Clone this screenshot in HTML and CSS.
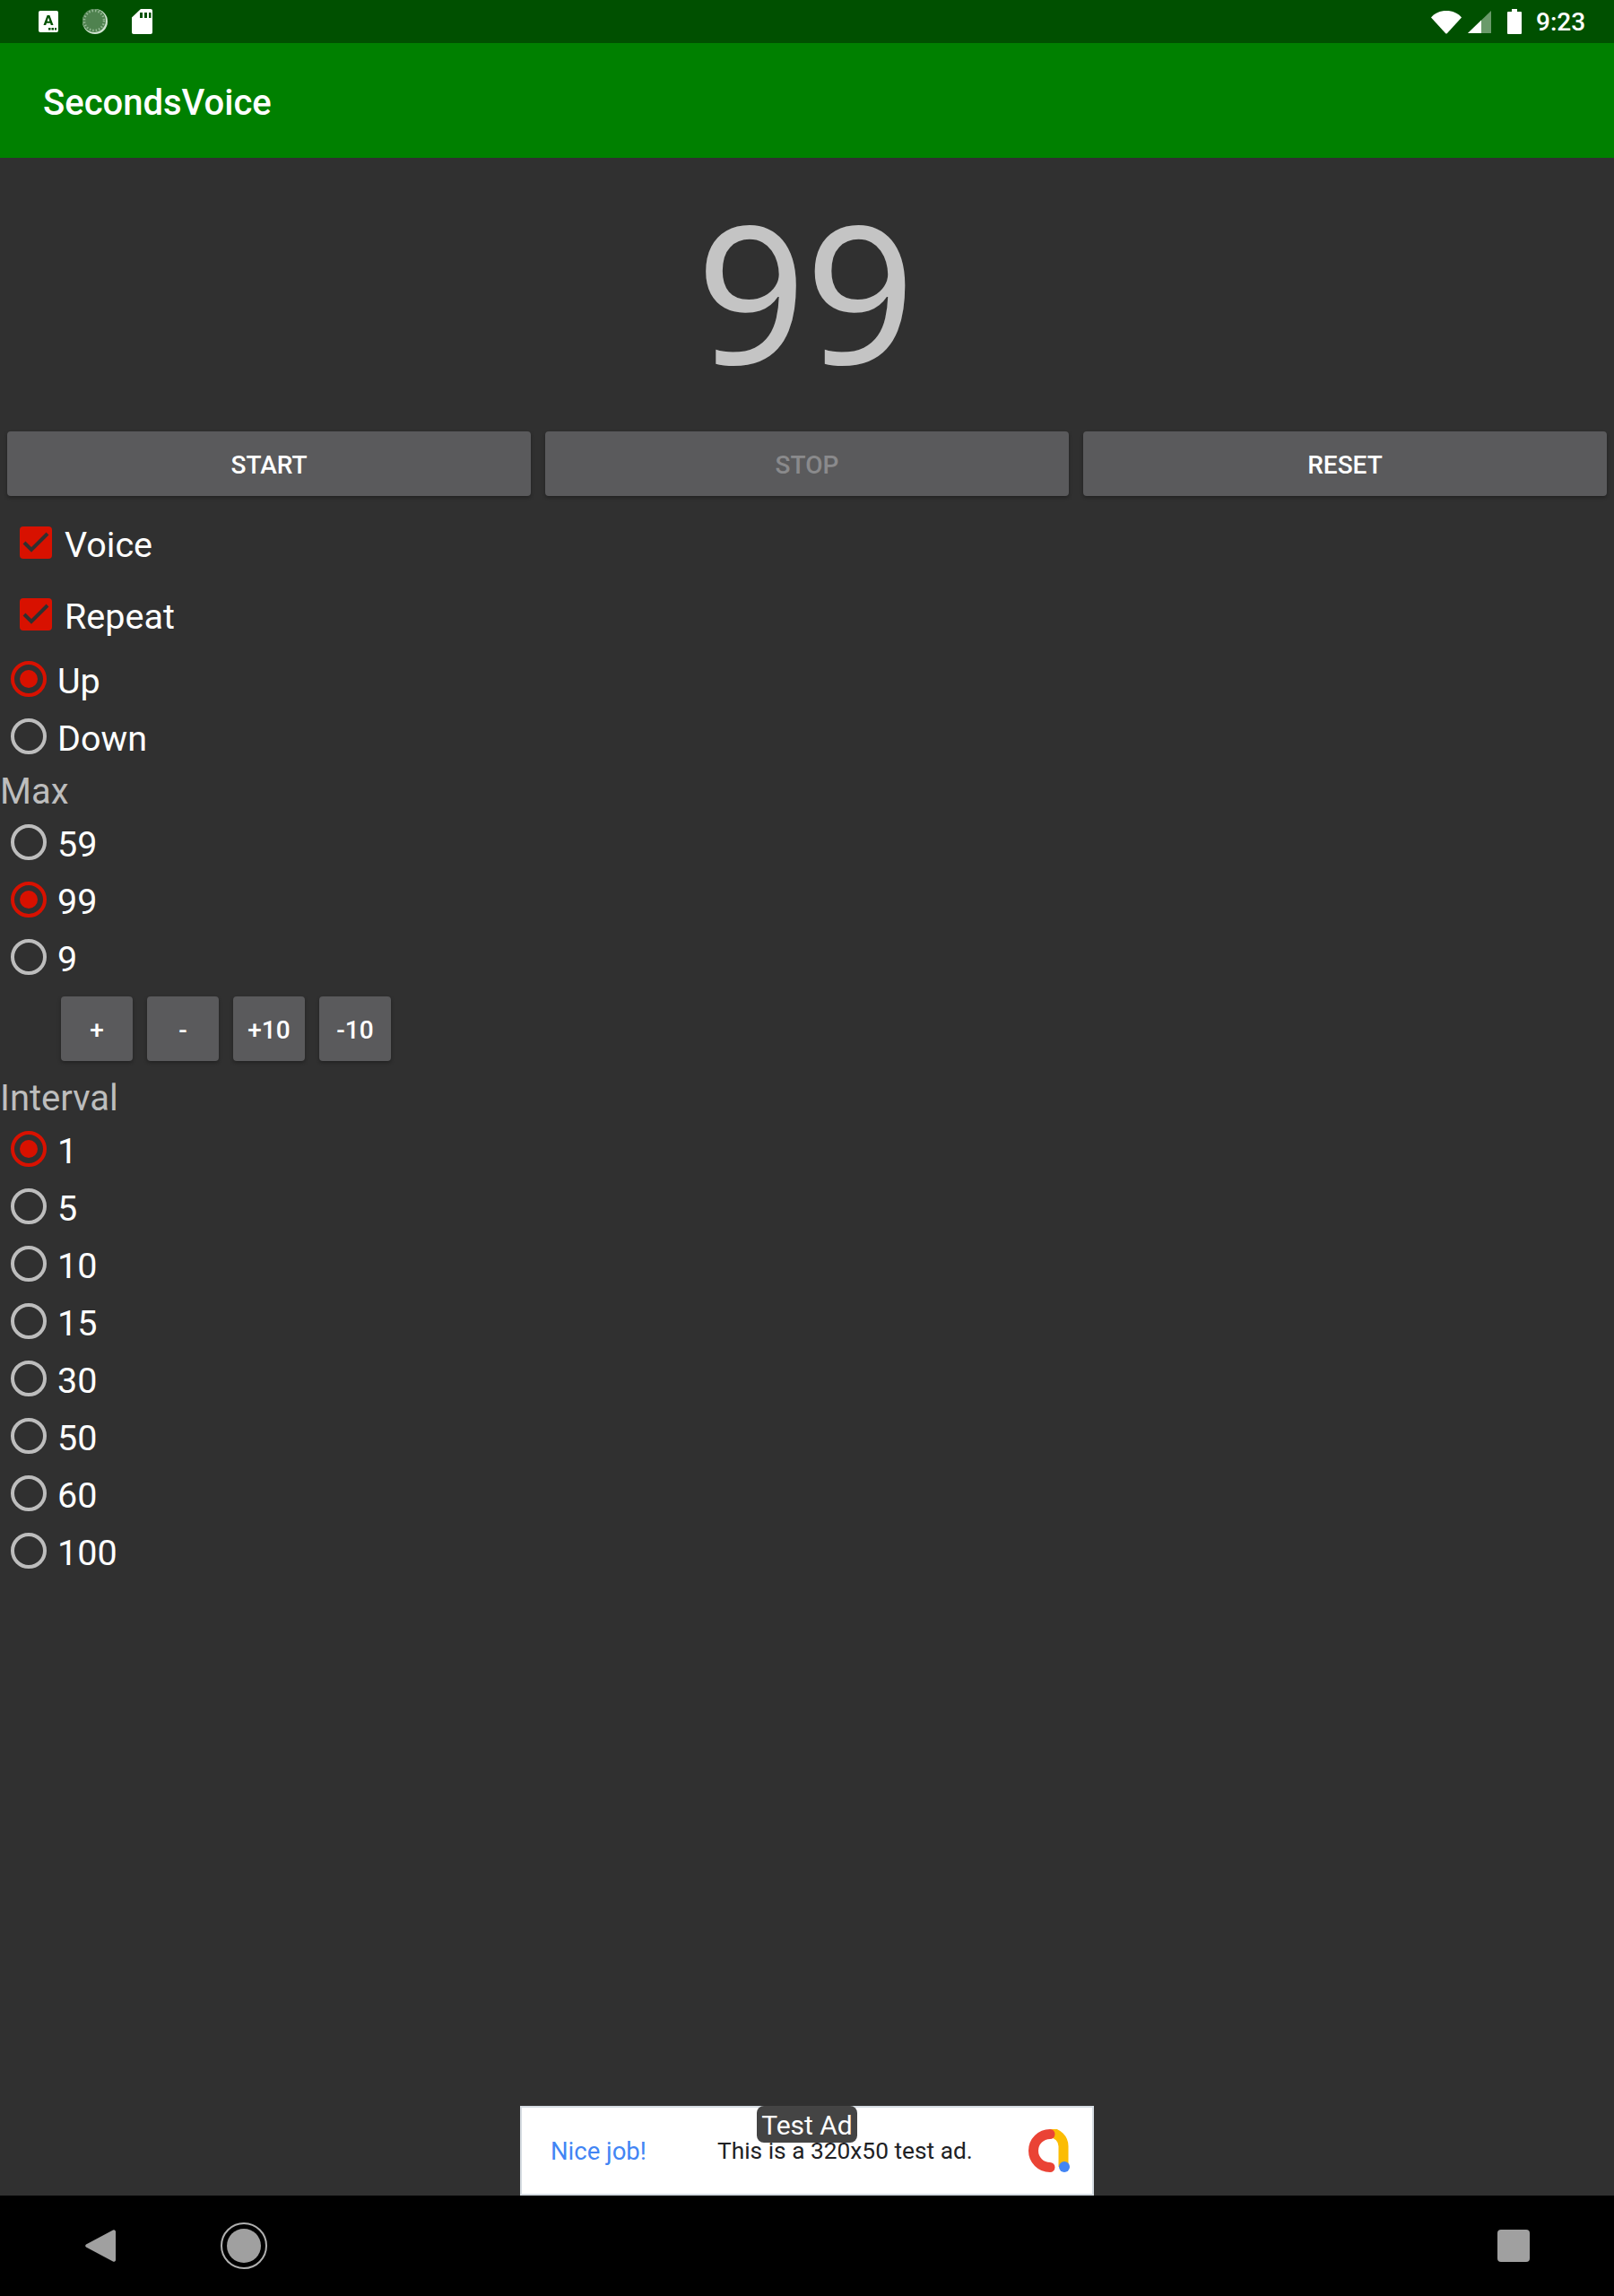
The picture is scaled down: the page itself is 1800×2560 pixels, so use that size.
FILE: index.html
```html
<!DOCTYPE html>
<html lang="en">
<head>
<meta charset="utf-8">
<title>SecondsVoice</title>
<link rel="stylesheet" href="styles.css">
</head>
<body>
<div class="screen">
  <header class="statusbar">
    <div class="status-left">
      <svg class="ic-a" width="22" height="24" viewBox="0 0 22 24"><rect width="22" height="24" rx="2" fill="#fff"/><path d="M5.500 16 9.600 5h2.800l4.100 11h-2.700l-.7-2.200H8.900L8.200 16zM9.600 11.700h2.800L11 7.600z" fill="#005000"/><path d="M11 19h2.500v2.500H11zM14.500 19H17v2.500h-2.500zM18 19h2v2.500h-2z" fill="#005000"/></svg>
      <svg class="ic-b" width="28" height="28" viewBox="0 0 28 28"><circle cx="14" cy="14" r="14" fill="#cfe3cf"/><circle cx="13" cy="13" r="13" fill="#4f824f"/><circle cx="13" cy="13" r="11" fill="none" stroke="#94b894" stroke-width="2.500" stroke-dasharray="1.500 2"/></svg>
      <svg class="ic-c" width="23" height="28" viewBox="0 0 23 28"><path d="M10 0h11a2 2 0 0 1 2 2v24a2 2 0 0 1-2 2H2a2 2 0 0 1-2-2V9.500z" fill="#fff"/><path d="M9 4h3v6H9zM14 4h3v6h-3zM19 4h2.500v6H19z" fill="#005000"/></svg>
    </div>
    <div class="status-right">
      <svg class="ic-wifi" width="34" height="27" viewBox="0 0 34 27"><path d="M0 8.500C4 3.500 10 1 17 1s13 2.500 17 7.500L18 26a1.400 1.400 0 0 1-2 0z" fill="#fff"/></svg>
      <svg class="ic-signal" width="26" height="25" viewBox="0 0 26 25"><path d="M0 25 26 0v25z" fill="#6a9a6a"/><path d="M0 25 15 10.500V25z" fill="#fff"/></svg>
      <svg class="ic-batt" width="16" height="28" viewBox="0 0 16 28"><path d="M5 0h6v3h4a1 1 0 0 1 1 1v23a1 1 0 0 1-1 1H1a1 1 0 0 1-1-1V4a1 1 0 0 1 1-1h4z" fill="#fff"/></svg>
      <span class="clock">9:23</span>
    </div>
  </header>

  <div class="toolbar">SecondsVoice</div>

  <main class="content">
    <div class="counter">99</div>

    <div class="main-buttons">
      <button class="btn">START</button>
      <button class="btn is-disabled">STOP</button>
      <button class="btn">RESET</button>
    </div>

    <div class="check-row"><span class="checkbox"><svg width="36" height="36" viewBox="0 0 36 36"><path d="M5 18l8 8L31 8" fill="none" stroke="#303030" stroke-width="4"/></svg></span><span class="row-text">Voice</span></div>
    <div class="check-row"><span class="checkbox"><svg width="36" height="36" viewBox="0 0 36 36"><path d="M5 18l8 8L31 8" fill="none" stroke="#303030" stroke-width="4"/></svg></span><span class="row-text">Repeat</span></div>

    <div class="radio-row"><span class="radio on"></span><span class="row-text">Up</span></div>
    <div class="radio-row"><span class="radio"></span><span class="row-text">Down</span></div>

    <div class="group-label">Max</div>
    <div class="radio-row"><span class="radio"></span><span class="row-text">59</span></div>
    <div class="radio-row"><span class="radio on"></span><span class="row-text">99</span></div>
    <div class="radio-row"><span class="radio"></span><span class="row-text">9</span></div>

    <div class="step-buttons">
      <button class="btn step">+</button>
      <button class="btn step">-</button>
      <button class="btn step">+10</button>
      <button class="btn step">-10</button>
    </div>

    <div class="group-label">Interval</div>
    <div class="radio-row"><span class="radio on"></span><span class="row-text">1</span></div>
    <div class="radio-row"><span class="radio"></span><span class="row-text">5</span></div>
    <div class="radio-row"><span class="radio"></span><span class="row-text">10</span></div>
    <div class="radio-row"><span class="radio"></span><span class="row-text">15</span></div>
    <div class="radio-row"><span class="radio"></span><span class="row-text">30</span></div>
    <div class="radio-row"><span class="radio"></span><span class="row-text">50</span></div>
    <div class="radio-row"><span class="radio"></span><span class="row-text">60</span></div>
    <div class="radio-row"><span class="radio"></span><span class="row-text">100</span></div>

    <div class="spacer"></div>

    <aside class="ad">
      <span class="ad-badge">Test Ad</span>
      <span class="ad-nice">Nice job!</span>
      <span class="ad-text">This is a 320x50 test ad.</span>
      <svg class="ad-logo" width="48" height="48" viewBox="0 0 48 48"><path d="M41 42V19A15 15 0 0 0 26 4" fill="none" stroke="#fbbc04" stroke-width="11"/><path d="M26 5.500A18.500 18.500 0 0 0 26 42.500" fill="none" stroke="#ea4335" stroke-width="11" stroke-linecap="round"/><circle cx="42" cy="42" r="6" fill="#4285f4"/></svg>
    </aside>
  </main>

  <nav class="navbar">
    <svg class="nav-back" width="34" height="38" viewBox="0 0 34 38"><path d="M31 1.500a2 2 0 0 1 3 1.500v32a2 2 0 0 1-3 1.500L1 20.500a2 2 0 0 1 0-3z" fill="#a0a0a0"/></svg>
    <svg class="nav-home" width="52" height="52" viewBox="0 0 52 52"><circle cx="26" cy="26" r="25" fill="none" stroke="#b0b0b0" stroke-width="2"/><circle cx="26" cy="26" r="19" fill="#a0a0a0"/></svg>
    <span class="nav-recent"></span>
  </nav>
</div>
</body>
</html>
```

FILE: styles.css
```css
* { box-sizing: border-box; }
html, body { margin: 0; padding: 0; }
body { font-family: Roboto, "Liberation Sans", sans-serif; background: #303030; }

.screen { width: 1800px; height: 2560px; display: flex; flex-direction: column; overflow: hidden; }

.statusbar { height: 48px; flex: none; background: #005000; display: flex; justify-content: space-between; align-items: center; padding: 0 33px 0 43px; }
.status-left { display: flex; align-items: center; }
.ic-a { margin-right: 27px; }
.ic-b { margin-right: 27px; }
.status-right { display: flex; align-items: center; }
.ic-wifi { margin-right: 7px; }
.ic-signal { margin-right: 18px; }
.ic-batt { margin-right: 16px; }
.clock { color: #fff; font-size: 28px; font-weight: 500; line-height: 51px; width: 54px; }

.toolbar { height: 128px; flex: none; background: #008000; color: #fff; font-size: 40px; font-weight: 500; line-height: 134px; padding-left: 48px; }

.content { flex: 1; display: flex; flex-direction: column; min-height: 0; }

.counter { height: 297px; flex: none; text-align: center; font-family: "Noto Sans", sans-serif; font-size: 214px; line-height: 295px; letter-spacing: -1px; padding-right: 4px; color: #c4c4c4; }

.main-buttons { display: flex; gap: 16px; padding: 8px 8px 12px; flex: none; }
.main-buttons .btn { flex: 1; height: 72px; }

.btn { border: 0; border-radius: 4px; background: #5a5a5c; color: #fff; font-family: Roboto, sans-serif; font-size: 28px; font-weight: 500; padding: 2px 0 0; box-shadow: 0 2px 4px rgba(0, 0, 0, .3); }
.is-disabled { color: #8a8a8c; }

.check-row { height: 80px; flex: none; display: flex; align-items: center; padding-left: 22px; }
.checkbox { width: 36px; height: 36px; border-radius: 4px; background: #d81100; margin-right: 14px; }
.checkbox svg { display: block; }

.radio-row { height: 64px; flex: none; display: flex; align-items: center; padding-left: 12px; }
.radio { width: 40px; height: 40px; border-radius: 50%; border: 4px solid #bdbdbd; margin-right: 12px; position: relative; flex: none; }
.radio.on { border-color: #d81100; }
.radio.on::after { content: ""; position: absolute; left: 6px; top: 6px; width: 20px; height: 20px; border-radius: 50%; background: #d81100; }

.row-text { color: #fff; font-size: 39.500px; line-height: 64px; padding-top: 6px; }

.group-label { height: 54px; flex: none; color: #bdbdbd; font-size: 40px; line-height: 60px; }

.step-buttons { display: flex; gap: 16px; height: 96px; flex: none; padding: 12px 0 12px 68px; }
.step { width: 80px; height: 72px; }

.spacer { flex: 1; min-height: 0; }

.ad { position: relative; align-self: center; flex: none; width: 640px; height: 100px; background: #fff; border: 2px solid #d5dce2; color: #202124; display: flex; align-items: center; font-size: 26.300px; }
.ad-badge { position: absolute; left: 262px; top: -2px; width: 112px; height: 41px; border-radius: 8px; background: #444; color: #fff; font-size: 30px; line-height: 43px; text-align: center; }
.ad-nice { color: #4285f4; font-size: 27.500px; margin-left: 32px; width: 186px; }
.ad-text { width: 345px; }
.ad-logo { flex: none; }

.navbar { height: 112px; flex: none; background: #000; display: flex; align-items: center; position: relative; padding-left: 95px; }
.nav-back { margin-right: 117px; }
.nav-recent { width: 36px; height: 36px; border-radius: 4px; background: #a0a0a0; margin-left: auto; margin-right: 94px; }
```
